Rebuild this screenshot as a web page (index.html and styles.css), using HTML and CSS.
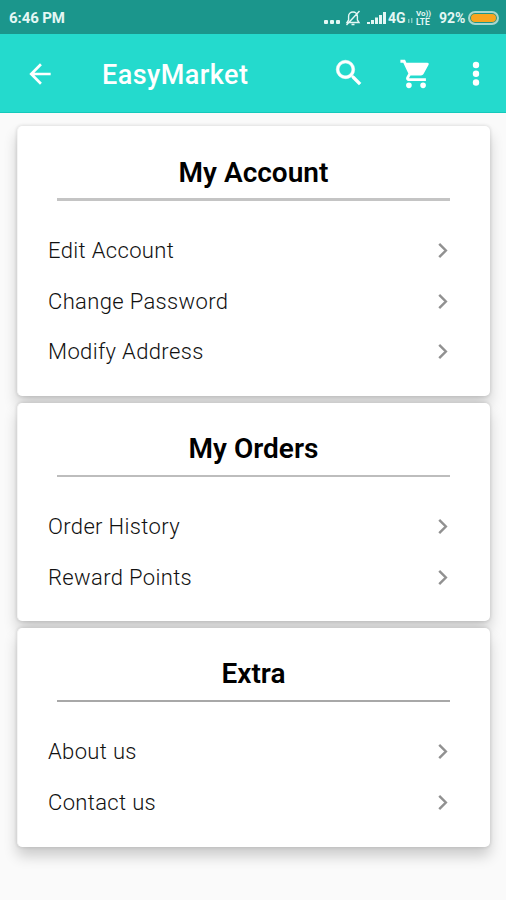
FILE: index.html
```
<!DOCTYPE html>
<html lang="en">
  <head>
    <meta charset="UTF-8">
    <title>EasyMarket</title>
    <link rel="stylesheet" href="styles.css">
  </head>
  <body>
    <svg width="0" height="0" class="defs">
      <symbol id="chevron" viewBox="0 0 12 18">
        <path d="M2 2l7 7-7 7" fill="none" stroke="#919191" stroke-width="2.600"/>
      </symbol>
    </svg>
    <div class="status">
      <span class="time">6:46 PM</span>
      <span class="dots"><i></i><i></i><i></i></span>
      <svg class="bell" width="16" height="16" viewBox="0 0 16 16" fill="none" stroke="#e4f7f4" stroke-width="1.400">
        <path d="M2 12.500h12L12.400 10V6.200C12.400 3.800 10.500 2 8 2S3.600 3.800 3.600 6.200V10zM6.500 14.500h3M1.500 15L14.500 1"/>
      </svg>
      <svg class="signal" width="19" height="12" viewBox="0 0 19 12" fill="#e4f7f4">
        <path d="M0 10h3v2H0zM4 8h3v4H4zM8 5.500h3V12H8zM12 3h3v9h-3zM16 0h3v12h-3z"/>
      </svg>
      <span class="net">4G</span>
      <svg class="tiny" width="5" height="5" viewBox="0 0 5 5" fill="#7fc8c0">
        <path d="M0 1h1.500v4H0zM3 0h1.500v5H3z"/>
      </svg>
      <span class="volte"><span class="vo">Vo))</span><span>LTE</span></span>
      <span class="percent">92%</span>
      <span class="battery"></span>
    </div>
    <div class="toolbar">
      <svg class="back" width="32" height="32" viewBox="0 0 24 24" fill="#fff">
        <path d="M20 11H7.830l5.590-5.590L12 4l-8 8 8 8 1.410-1.410L7.830 13H20z"/>
      </svg>
      <span class="brand">EasyMarket</span>
      <svg class="search" width="34" height="34" viewBox="0 0 24 24" fill="#fff" stroke="#fff" stroke-width=".4">
        <path d="M15.500 14h-.79l-.28-.27A6.470 6.470 0 0 0 16 9.500 6.500 6.500 0 1 0 9.500 16c1.610 0 3.090-.59 4.230-1.570l.27.28v.79l5 4.990L20.490 19zM9.500 14C7.010 14 5 11.990 5 9.500S7.010 5 9.500 5 14 7.010 14 9.500 11.990 14 9.500 14z"/>
      </svg>
      <svg class="cart" width="34" height="34" viewBox="0 0 24 24" fill="#fff">
        <path d="M7 18a2 2 0 1 0 0 4 2 2 0 0 0 0-4zM1 2v2h2l3.600 7.590-1.350 2.450C4.520 15.370 5.480 17 7 17h12v-2H7.420a.25.25 0 0 1-.25-.25l.03-.12.9-1.630h7.450c.75 0 1.410-.41 1.750-1.030l3.580-6.490A1 1 0 0 0 20 4H5.210l-.94-2zM17 18a2 2 0 1 0 0 4 2 2 0 0 0 0-4z"/>
      </svg>
      <svg class="more" width="8" height="26" viewBox="0 0 8 26" fill="#fff">
        <circle cx="4" cy="4" r="3.200"/>
        <circle cx="4" cy="12.800" r="3.200"/>
        <circle cx="4" cy="21.500" r="3.200"/>
      </svg>
    </div>
    <div class="content">
      <div class="card account">
        <h2>My Account</h2>
        <div class="row"><span>Edit Account</span><svg class="arrow"><use href="#chevron"/></svg></div>
        <div class="row"><span>Change Password</span><svg class="arrow"><use href="#chevron"/></svg></div>
        <div class="row"><span>Modify Address</span><svg class="arrow"><use href="#chevron"/></svg></div>
      </div>
      <div class="card orders">
        <h2>My Orders</h2>
        <div class="row"><span>Order History</span><svg class="arrow"><use href="#chevron"/></svg></div>
        <div class="row"><span>Reward Points</span><svg class="arrow"><use href="#chevron"/></svg></div>
      </div>
      <div class="card extra">
        <h2>Extra</h2>
        <div class="row"><span>About us</span><svg class="arrow"><use href="#chevron"/></svg></div>
        <div class="row"><span>Contact us</span><svg class="arrow"><use href="#chevron"/></svg></div>
      </div>
    </div>
  </body>
</html>
```
FILE: styles.css
```
* {
  box-sizing: border-box;
}
body {
  margin: 0;
  height: 900px;
  overflow: hidden;
  background-color: #fafafa;
  font-family: Roboto, sans-serif;
}
svg {
  flex: none;
}
.defs {
  display: block;
}
/* status bar */
.status {
  display: flex;
  align-items: center;
  height: 34px;
  padding: 1px 7px 0 9px;
  background-color: #1b968c;
  color: #e4f7f4;
  font-size: 15px;
  font-weight: 700;
  white-space: nowrap;
}
.time {
  width: 315px;
  letter-spacing: -0.1px;
}
.dots {
  display: flex;
  gap: 2px;
  width: 21px;
  padding-top: 8px;
}
.dots i {
  width: 4px;
  height: 4px;
  border-radius: 1px;
  background-color: #e4f7f4;
}
.signal {
  margin-left: 6px;
}
.net {
  width: 19px;
  margin-left: 2px;
  font-size: 14px;
}
.tiny {
  margin: 6px 0 0 1px;
}
.volte {
  display: flex;
  flex-direction: column;
  width: 17px;
  margin-left: 3px;
  font-size: 8.5px;
  line-height: 8px;
}
.vo {
  font-size: 8px;
}
.percent {
  width: 27px;
  margin-left: 6px;
  font-size: 14px;
}
.battery {
  width: 31px;
  height: 14px;
  margin-left: auto;
  border: 2px solid #a5d8d0;
  border-radius: 7px;
  background-color: #f9a51f;
  box-shadow: inset 0 0 0 1px #1b968c;
}
/* toolbar */
.toolbar {
  display: flex;
  align-items: center;
  height: 79px;
  padding: 0 26px 0 24px;
  border-bottom: 1px solid #14c9bb;
  background-color: #24dacd;
}
.back {
  margin-top: 1px;
}
.brand {
  width: 230px;
  margin-left: 46px;
  padding-top: 4px;
  color: #fff;
  font-size: 27px;
  font-weight: 500;
  letter-spacing: 0.45px;
}
.cart {
  margin: 1px 0 0 33px;
}
.more {
  margin: 1px 0 0 auto;
}
/* cards */
.content {
  display: flex;
  flex-direction: column;
  gap: 7px;
  padding: 13px 16px 0 17px;
}
.card {
  height: 270px;
  padding: 25px 31px 0;
  border: 1px solid #f4f4f4;
  border-width: 0 0 0 1px;
  border-radius: 5px;
  background-color: #fff;
  box-shadow: 0 0 3px 1px rgba(0,0,0,0.09), 0 9px 14px rgba(0,0,0,0.19);
}
.orders {
  height: 218px;
}
.extra {
  height: 219px;
}
h2 {
  height: 49px;
  margin: 0 9px 24px 8px;
  border-bottom: 2px solid #bdbdbd;
  color: #000;
  font-size: 28px;
  font-weight: 600;
  line-height: 42px;
  text-align: center;
}
.account h2 {
  height: 50px;
  border-bottom: 3px solid #c4c4c4;
  line-height: 43px;
}
.extra h2 {
  border-bottom-color: #a8a8a8;
}
.row {
  display: flex;
  align-items: center;
  justify-content: space-between;
  height: 50.7px;
  margin-left: -1px;
  color: #111;
  font-size: 22px;
  font-weight: 300;
  letter-spacing: 0.35px;
}
.arrow {
  width: 12px;
  height: 17px;
  margin-right: 10px;
}
```
